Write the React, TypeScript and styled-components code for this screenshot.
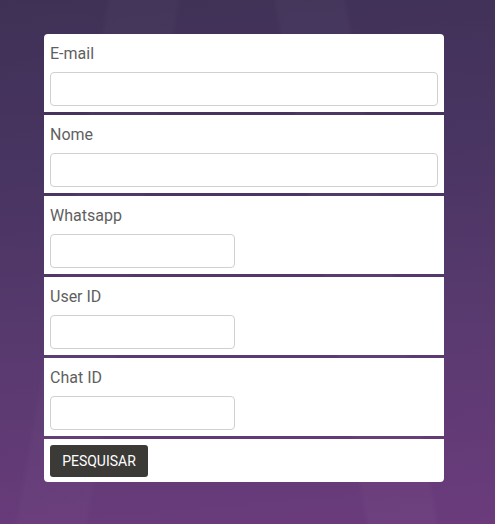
import styled, { createGlobalStyle } from 'styled-components'

const GlobalStyle = createGlobalStyle`
  html, body {
    margin: 0;
    padding: 0;
    height: 100%;
  }
  body {
    font-family: Roboto, "Liberation Sans", Arial, sans-serif;
  }
  #root {
    min-height: 100%;
  }
`

const fields = [
  { label: 'E-mail', wide: true },
  { label: 'Nome', wide: true },
  { label: 'Whatsapp', wide: false },
  { label: 'User ID', wide: false },
  { label: 'Chat ID', wide: false },
]

function App() {
  return (
    <>
      <GlobalStyle />
      <Page>
        <Form onSubmit={(e) => e.preventDefault()}>
          {fields.map((f) => (
            <Section key={f.label}>
              <Label>{f.label}</Label>
              <Input type="text" $wide={f.wide} />
            </Section>
          ))}
          <Section $last>
            <Button type="submit">PESQUISAR</Button>
          </Section>
        </Form>
      </Page>
    </>
  )
}

const Page = styled.div`
  width: 100%;
  height: 524px;
  box-sizing: border-box;
  padding: 34px 0 0 44px;
  display: flex;
  align-items: flex-start;
  background:
    linear-gradient(100deg, rgba(255,255,255,0) 18%, rgba(255,255,255,0.02) 19%, rgba(255,255,255,0.02) 30%, rgba(255,255,255,0) 31%),
    linear-gradient(80deg, rgba(255,255,255,0) 62%, rgba(255,255,255,0.025) 63%, rgba(255,255,255,0.025) 74%, rgba(255,255,255,0) 75%),
    linear-gradient(175deg, #3f3156 0%, #4a3563 35%, #5a3a70 65%, #6b3b7c 100%);
`

const Form = styled.form`
  width: 400px;
  display: flex;
  flex-direction: column;
  gap: 3px;
`

const Section = styled.div<{ $last?: boolean }>`
  background: #fff;
  padding: 8px 6px 6px;
  display: flex;
  flex-direction: column;
  align-items: flex-start;

  &:first-child {
    border-radius: 4px 4px 0 0;
  }

  ${(p) => p.$last && `
    padding: 6px 6px 5px;
    border-radius: 0 0 4px 4px;
  `}
`

const Label = styled.label`
  font-size: 16px;
  line-height: 24px;
  color: #5f5f5f;
  margin-bottom: 6px;
`

const Input = styled.input<{ $wide: boolean }>`
  width: ${(p) => (p.$wide ? '388px' : '185px')};
  height: 34px;
  box-sizing: border-box;
  border: 1px solid #d0d0d0;
  border-radius: 4px;
  background: #fff;
  padding: 6px 10px;
  font-size: 14px;
  outline: none;
`

const Button = styled.button`
  width: 98px;
  height: 32px;
  border: none;
  border-radius: 3px;
  background: #3b3a37;
  color: #fff;
  font-family: Roboto, "Liberation Sans", Arial, sans-serif;
  font-size: 14px;
  padding: 0;
  cursor: pointer;
`

export default App
